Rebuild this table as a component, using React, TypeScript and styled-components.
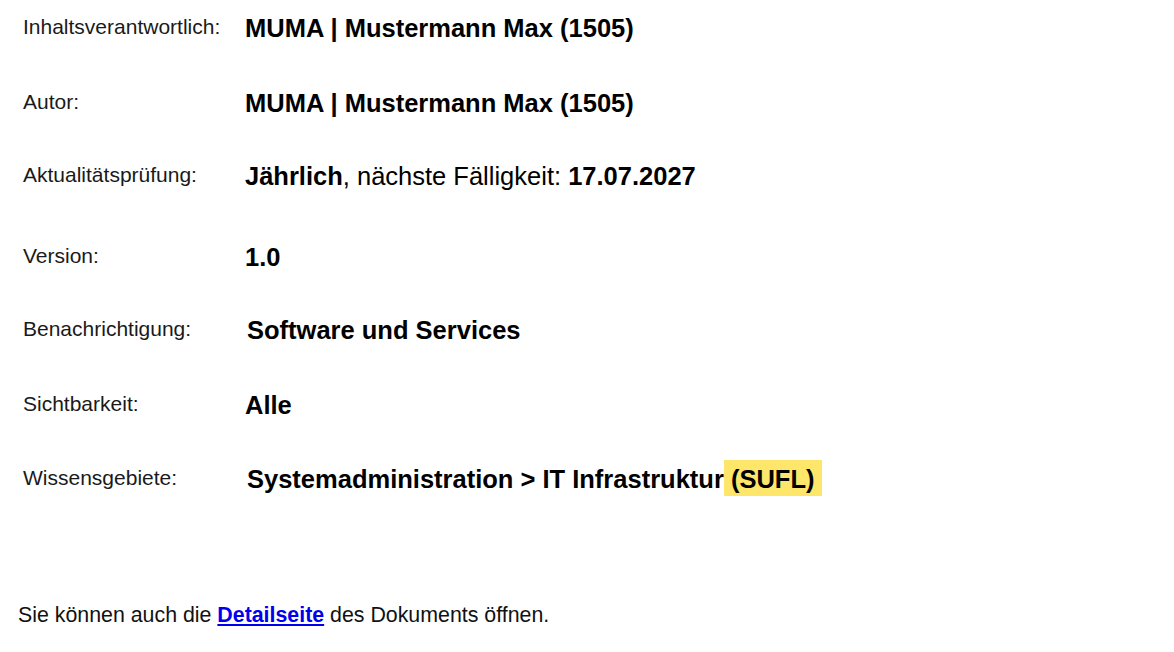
import React from "react";
import styled, { createGlobalStyle } from "styled-components";

const GlobalStyle = createGlobalStyle`
  html, body {
    margin: 0;
    padding: 0;
    background: #ffffff;
  }
  body {
    font-family: "Liberation Sans", Arial, sans-serif;
    color: #111111;
  }
`;

const Page = styled.main`
  width: 1174px;
  height: 652px;
  box-sizing: border-box;
  padding: 15px 0 0 0;
  display: flex;
  flex-direction: column;
  overflow: hidden;
`;

const Fields = styled.dl`
  margin: 0;
  padding: 0 0 0 23px;
  display: flex;
  flex-direction: column;
`;

const Row = styled.div<{ $pitch?: number }>`
  display: grid;
  grid-template-columns: 222px 1fr;
  align-items: start;
  height: ${(p) => (p.$pitch ? `${p.$pitch}px` : "auto")};
`;

const Label = styled.dt`
  margin: 0;
  font-size: 21px;
  line-height: normal;
  color: #1a1a1a;
  white-space: nowrap;
`;

const Value = styled.dd<{ $shift?: number }>`
  margin: -1px 0 0 0;
  padding-left: ${(p) => p.$shift ?? 0}px;
  font-size: 25.5px;
  line-height: normal;
  font-weight: 700;
  color: #000000;
  white-space: nowrap;
`;

const Plain = styled.span`
  font-weight: 400;
`;

const Highlight = styled.mark`
  background: #fde66a;
  color: inherit;
  padding: 4.5px 8px 3.5px 0;
`;

const Footer = styled.p`
  margin: 109px 0 0 18px;
  font-size: 21.35px;
  line-height: normal;
  color: #111111;
`;

const Link = styled.a`
  color: #0000ee;
  font-weight: 700;
  text-decoration: underline;
`;

export default function App() {
  return (
    <>
      <GlobalStyle />
      <Page>
        <Fields>
          <Row $pitch={75}>
            <Label>Inhaltsverantwortlich:</Label>
            <Value>MUMA | Mustermann Max (1505)</Value>
          </Row>
          <Row $pitch={73}>
            <Label>Autor:</Label>
            <Value>MUMA | Mustermann Max (1505)</Value>
          </Row>
          <Row $pitch={80.5}>
            <Label>Aktualitätsprüfung:</Label>
            <Value>
              Jährlich<Plain>, nächste Fälligkeit: </Plain>17.07.2027
            </Value>
          </Row>
          <Row $pitch={73}>
            <Label>Version:</Label>
            <Value>1.0</Value>
          </Row>
          <Row $pitch={75.5}>
            <Label>Benachrichtigung:</Label>
            <Value $shift={2}>Software und Services</Value>
          </Row>
          <Row $pitch={73.5}>
            <Label>Sichtbarkeit:</Label>
            <Value>Alle</Value>
          </Row>
          <Row>
            <Label>Wissensgebiete:</Label>
            <Value $shift={2}>
              Systemadministration &gt; IT Infrastruktur
              <Highlight> (SUFL)</Highlight>
            </Value>
          </Row>
        </Fields>
        <Footer>
          Sie können auch die <Link href="#">Detailseite</Link> des Dokuments
          öffnen.
        </Footer>
      </Page>
    </>
  );
}
